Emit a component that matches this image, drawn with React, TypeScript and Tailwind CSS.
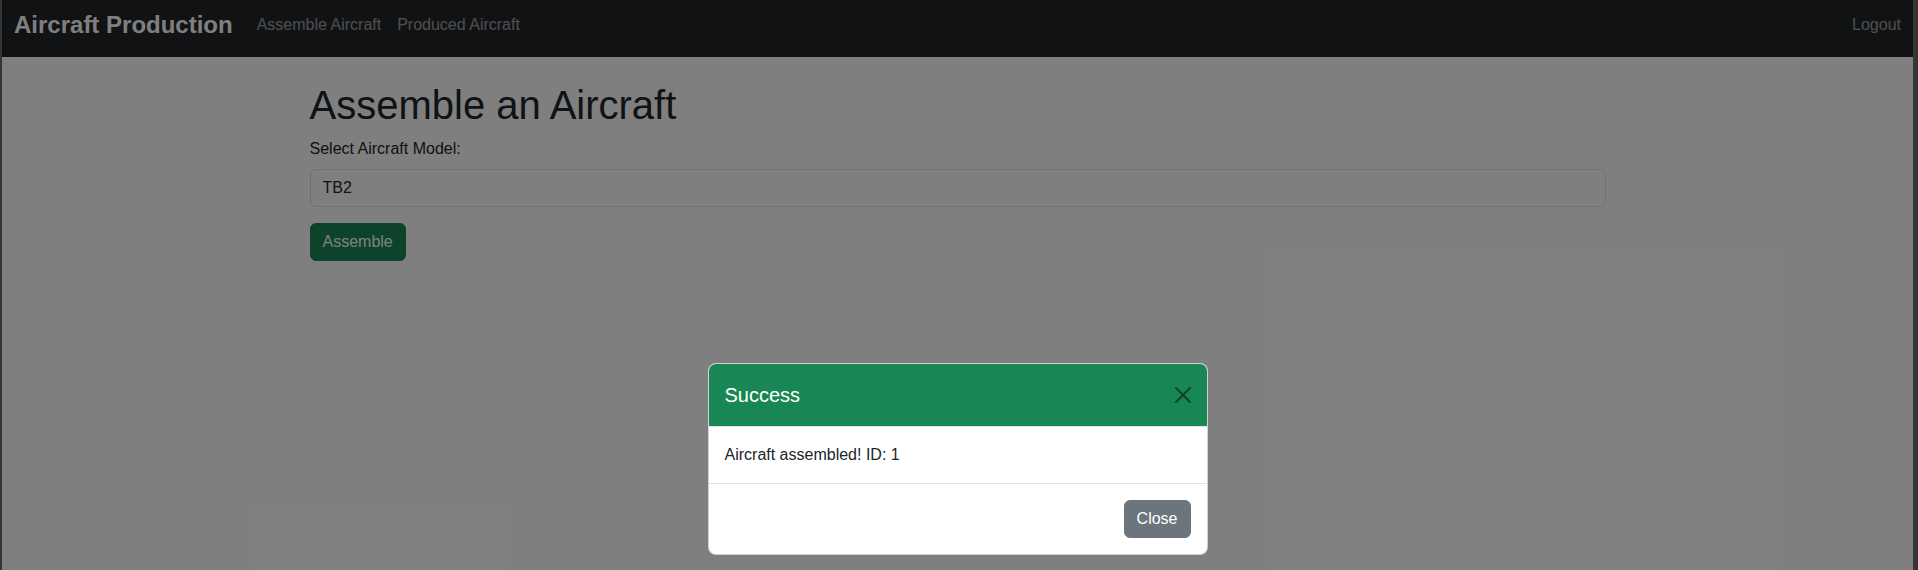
import { useState } from 'react';

const models = ['TB2', 'TB3', 'AKINCI', 'KIZILELMA'];

function CloseIcon() {
  return (
    <svg viewBox="0 0 16 16" className="w-4 h-4 fill-black opacity-50">
      <path d="M.293.293a1 1 0 0 1 1.414 0L8 6.586 14.293.293a1 1 0 1 1 1.414 1.414L9.414 8l6.293 6.293a1 1 0 0 1-1.414 1.414L8 9.414l-6.293 6.293a1 1 0 0 1-1.414-1.414L6.586 8 .293 1.707a1 1 0 0 1 0-1.414z" />
    </svg>
  );
}

export default function App() {
  const [model, setModel] = useState('TB2');
  const [assembledId] = useState(1);
  const [showModal, setShowModal] = useState(true);

  return (
    <div className="flex h-[570px] overflow-hidden font-['Liberation_Sans',Arial,sans-serif] text-[#212529]">
      <div className="w-[2px] shrink-0 bg-[#363636]" />

      <div className="relative flex-1 bg-white">
        <nav className="h-[57px] bg-[#212529] px-3 pb-[7px] flex items-center">
          <a className="text-white text-2xl font-bold mr-4 leading-9">Aircraft Production</a>
          <a className="px-2 text-base text-white/55 leading-6">Assemble Aircraft</a>
          <a className="px-2 text-base text-white/55 leading-6">Produced Aircraft</a>
          <a className="ml-auto text-base text-white/55 leading-6">Logout</a>
        </nav>

        <div className="max-w-[1320px] mx-auto px-3 mt-6">
          <h1 className="text-[40px] leading-[48px] font-medium mb-2">Assemble an Aircraft</h1>
          <label className="block text-base leading-6 mb-2">Select Aircraft Model:</label>
          <select
            value={model}
            onChange={(e) => setModel(e.target.value)}
            className="block w-full h-[38px] appearance-none border border-[#dee2e6] rounded-md px-3 text-base bg-white outline-none"
          >
            {models.map((m) => (
              <option key={m} value={m}>{m}</option>
            ))}
          </select>
          <button className="mt-4 h-[38px] px-3 rounded-md border border-[#198754] bg-[#198754] text-white text-base">
            Assemble
          </button>
        </div>

        {showModal && (
          <>
            <div className="absolute inset-0 bg-black/50" />
            <div className="absolute top-[363px] left-1/2 -translate-x-1/2 w-[500px] bg-white rounded-lg border border-black/[.175] overflow-hidden">
              <div className="bg-[#198754] px-4 h-[63px] flex items-center justify-between border-b border-[#dee2e6]">
                <h5 className="text-white text-xl leading-[30px]">Success</h5>
                <button onClick={() => setShowModal(false)} className="w-4 h-4">
                  <CloseIcon />
                </button>
              </div>
              <div className="p-4 leading-6">Aircraft assembled! ID: {assembledId}</div>
              <div className="border-t border-[#dee2e6] p-[14px] flex justify-end">
                <button
                  onClick={() => setShowModal(false)}
                  className="m-[2px] h-[38px] px-3 rounded-md bg-[#6c757d] border border-[#6c757d] text-white text-base"
                >
                  Close
                </button>
              </div>
            </div>
          </>
        )}
      </div>

      <div className="w-[5px] shrink-0 bg-[#363636]" />
    </div>
  );
}
